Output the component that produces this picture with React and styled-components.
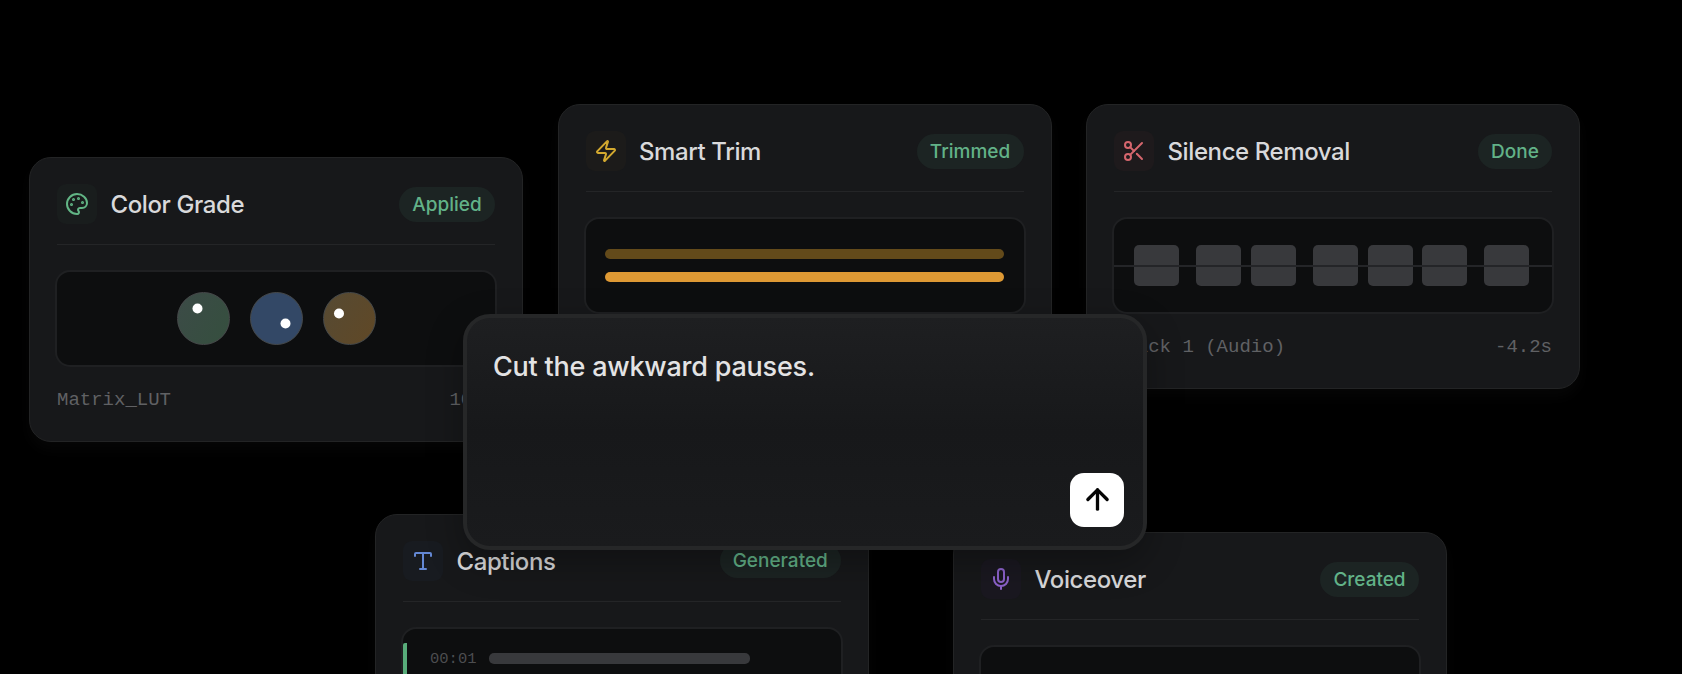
import styled, { createGlobalStyle } from "styled-components";
import { ArrowUp, Mic, Palette, Scissors, Type, Zap } from "lucide-react";

const GlobalStyle = createGlobalStyle`
  * {
    box-sizing: border-box;
  }

  body {
    margin: 0;
    background: #000;
    overflow: hidden;
    font-family: Inter, "Liberation Sans", sans-serif;
  }
`;

const Stage = styled.main`
  position: relative;
  width: 1682px;
  height: 674px;
  overflow: hidden;
  background: #000;
`;

const TopRow = styled.section`
  display: flex;
  align-items: flex-start;
  gap: 34.5px;
  height: 513.5px;
  padding: 104px 0 0 29px;
`;

const BottomRow = styled.section`
  display: flex;
  align-items: flex-start;
  gap: 84px;
  padding-left: 375px;
`;

const CardBox = styled.article`
  flex: none;
  width: 494px;
  height: 285px;
  margin-top: ${(props) => props.$drop || 0}px;
  padding: 26px 27px;
  border: 1px solid #232425;
  border-radius: 22px;
  background: #17181a;
  box-shadow: 0 8px 14px rgba(255, 255, 255, 0.025);
`;

const CardHeader = styled.header`
  display: flex;
  align-items: center;
  height: 61px;
  padding-bottom: 20px;
  border-bottom: 1px solid #242527;
`;

const IconTile = styled.span`
  display: flex;
  align-items: center;
  justify-content: center;
  width: 40px;
  height: 40px;
  border-radius: 9px;
  color: ${(props) => props.$color};
  background: ${(props) => props.$tint};
`;

const Title = styled.h2`
  flex: 1;
  margin: 2px 0 0 13.5px;
  color: #d9d9db;
  font-size: 24px;
  font-weight: 500;
  line-height: 30px;
  letter-spacing: -0.4px;
  white-space: nowrap;
`;

const Pill = styled.span`
  display: flex;
  align-items: center;
  justify-content: center;
  width: ${(props) => props.$width}px;
  height: 35px;
  border-radius: 18px;
  color: #62b288;
  background: #1c2423;
  font-size: 19px;
  font-weight: 500;
`;

const Preview = styled.div`
  position: relative;
  display: flex;
  height: 97px;
  margin: 25px -2px 0;
  border: 2px solid #1f2022;
  border-radius: 15px;
  background: #0d0e0f;
  overflow: hidden;
`;

const CardFooter = styled.footer`
  display: flex;
  justify-content: space-between;
  margin-top: 22px;
  color: #606164;
  font-family: "Liberation Mono", monospace;
  font-size: 19px;
  line-height: 22px;
`;

const Wheels = styled.div`
  display: flex;
  flex: 1;
  align-items: center;
  justify-content: center;
  gap: 20px;
`;

const Wheel = styled.span`
  display: flex;
  align-items: center;
  justify-content: center;
  width: 53px;
  height: 53px;
  border: 1px solid #46494a;
  border-radius: 50%;
  background: ${(props) => props.$fill};
`;

const WheelDot = styled.i`
  width: 10px;
  height: 10px;
  border-radius: 50%;
  background: #fff;
  transform: translate(${(props) => props.$x}px, ${(props) => props.$y}px);
`;

const Tracks = styled.div`
  display: flex;
  flex: 1;
  flex-direction: column;
  justify-content: center;
  gap: 12.5px;
  padding: 0 19.5px;
`;

const Track = styled.div`
  height: 10.5px;
  border-radius: 5px;
  background: ${(props) => props.$color};
`;

const Clips = styled.div`
  display: flex;
  flex: 1;
  align-items: center;
  padding-left: 20px;

  /* playhead axis drawn over the clips */
  &::after {
    content: "";
    position: absolute;
    top: 46px;
    left: 0;
    right: 0;
    height: 2px;
    background: #242528;
  }
`;

const Clip = styled.span`
  width: 45px;
  height: 41px;
  margin-right: ${(props) => props.$gap}px;
  border-radius: 5px;
  background: #38393c;
`;

const CaptionLine = styled.div`
  display: flex;
  flex: 1;
  align-items: center;
  height: 32px;
  margin-top: 14px;
  padding-left: 23px;
  border-left: 4px solid #58ac7a;
  border-top-left-radius: 2px;
`;

const Timestamp = styled.time`
  width: 59px;
  color: #4c4d4f;
  font-family: "Liberation Mono", monospace;
  font-size: 15.5px;
`;

const CaptionBar = styled.span`
  width: 260.5px;
  height: 10.5px;
  border-radius: 5px;
  background: #38393c;
`;

const Prompt = styled.form`
  position: absolute;
  top: 313.5px;
  left: 463px;
  display: flex;
  flex-direction: column;
  justify-content: space-between;
  width: 684px;
  height: 236px;
  padding: 31px 19px 19px 26px;
  border: 4px solid #262728;
  border-radius: 27px;
  background: linear-gradient(#1e1f21, #17181a 50%, #1a1b1d);
  box-shadow: 0 12px 36px rgba(0, 0, 0, 0.3);
`;

const PromptText = styled.p`
  margin: 0;
  color: #e3e3e4;
  font-size: 27px;
  font-weight: 500;
  line-height: 36px;
  letter-spacing: -0.22px;
  white-space: nowrap;
`;

const SendButton = styled.button`
  display: flex;
  align-self: flex-end;
  align-items: center;
  justify-content: center;
  width: 54px;
  height: 54px;
  padding: 0;
  border: none;
  border-radius: 14px;
  color: #050505;
  background: #fff;
`;

const clipGaps = [16.7, 10.6, 16.7, 9.8, 9.6, 16.6, 0];

function Card({ icon: Icon, color, tint, title, status, pill, drop, children, footer }) {
  return (
    <CardBox $drop={drop}>
      <CardHeader>
        <IconTile $color={color} $tint={tint}>
          <Icon size={24} strokeWidth={2} />
        </IconTile>
        <Title>{title}</Title>
        <Pill $width={pill}>{status}</Pill>
      </CardHeader>
      <Preview>{children}</Preview>
      {footer && (
        <CardFooter>
          <span>{footer[0]}</span>
          <span>{footer[1]}</span>
        </CardFooter>
      )}
    </CardBox>
  );
}

export default function App() {
  return (
    <Stage>
      <GlobalStyle />
      <TopRow>
        <Card
          icon={Palette}
          color="#62b585"
          tint="#191d1d"
          title="Color Grade"
          status="Applied"
          pill={96}
          drop={53}
          footer={["Matrix_LUT", "100%"]}
        >
          <Wheels>
            <Wheel $fill="linear-gradient(120deg, #3c4b47, #354f3e)">
              <WheelDot $x={-5.5} $y={-10.5} />
            </Wheel>
            <Wheel $fill="#334866">
              <WheelDot $x={9.5} $y={4.5} />
            </Wheel>
            <Wheel $fill="linear-gradient(120deg, #564a33, #604826)">
              <WheelDot $x={-10} $y={-5.5} />
            </Wheel>
          </Wheels>
        </Card>
        <Card
          icon={Zap}
          color="#d3a92f"
          tint="#1c1b1a"
          title="Smart Trim"
          status="Trimmed"
          pill={107}
        >
          <Tracks>
            <Track $color="#634a1a" />
            <Track $color="#de9934" />
          </Tracks>
        </Card>
        <Card
          icon={Scissors}
          color="#d5666d"
          tint="#1e1a1c"
          title="Silence Removal"
          status="Done"
          pill={74}
          footer={["Track 1 (Audio)", "-4.2s"]}
        >
          <Clips>
            {clipGaps.map((gap, i) => (
              <Clip key={i} $gap={gap} />
            ))}
          </Clips>
        </Card>
      </TopRow>
      <BottomRow>
        <Card
          icon={Type}
          color="#6488d4"
          tint="#181b20"
          title="Captions"
          status="Generated"
          pill={121.5}
        >
          <CaptionLine>
            <Timestamp>00:01</Timestamp>
            <CaptionBar />
          </CaptionLine>
        </Card>
        <Card
          icon={Mic}
          color="#8c62cb"
          tint="#1a1820"
          title="Voiceover"
          status="Created"
          pill={99}
          drop={18.5}
        />
      </BottomRow>
      <Prompt>
        <PromptText>Cut the awkward pauses.</PromptText>
        <SendButton type="button" aria-label="Send">
          <ArrowUp size={33} strokeWidth={2.4} />
        </SendButton>
      </Prompt>
    </Stage>
  );
}
